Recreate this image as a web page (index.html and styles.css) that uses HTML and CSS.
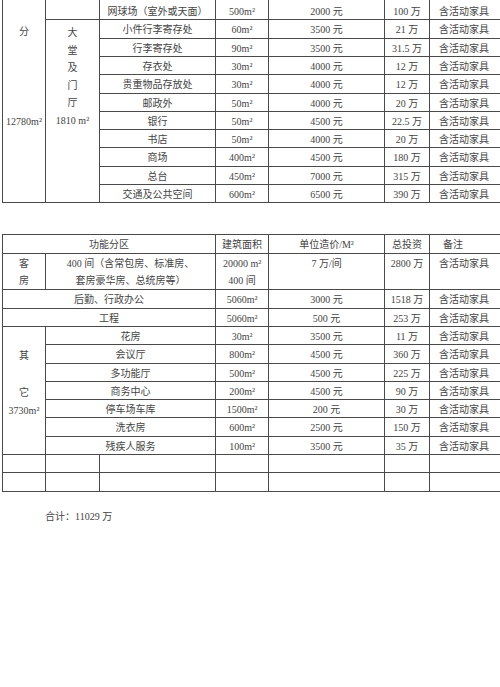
FILE: index.html
```html
<!DOCTYPE html>
<html lang="zh-CN">
<head>
<meta charset="utf-8">
<title>功能分区投资估算</title>
<link rel="stylesheet" href="styles.css">
</head>
<body>
<table class="sheet sheet-top">
  <colgroup><col class="c1"><col class="c2"><col class="c3"><col class="c4"><col class="c5"><col class="c6"><col class="c7"></colgroup>
  <tr class="r first">
    <td rowspan="11" class="stack stack-area">分<br>&nbsp;<br>&nbsp;<br>&nbsp;<br>&nbsp;<br>12780m²</td>
    <td></td><td>网球场（室外或天面）</td><td>500m²</td><td>2000 元</td><td>100 万</td><td class="note">含活动家具</td>
  </tr>
  <tr class="r">
    <td rowspan="10" class="stack stack-lobby">大<br>堂<br>及<br>门<br>厅<br>1810 m²</td>
    <td>小件行李寄存处</td><td>60m²</td><td>3500 元</td><td>21 万</td><td class="note">含活动家具</td>
  </tr>
  <tr class="r"><td>行李寄存处</td><td>90m²</td><td>3500 元</td><td>31.5 万</td><td class="note">含活动家具</td></tr>
  <tr class="r"><td>存衣处</td><td>30m²</td><td>4000 元</td><td>12 万</td><td class="note">含活动家具</td></tr>
  <tr class="r"><td>贵重物品存放处</td><td>30m²</td><td>4000 元</td><td>12 万</td><td class="note">含活动家具</td></tr>
  <tr class="r"><td>邮政外</td><td>50m²</td><td>4000 元</td><td>20 万</td><td class="note">含活动家具</td></tr>
  <tr class="r"><td>银行</td><td>50m²</td><td>4500 元</td><td>22.5 万</td><td class="note">含活动家具</td></tr>
  <tr class="r"><td>书店</td><td>50m²</td><td>4000 元</td><td>20 万</td><td class="note">含活动家具</td></tr>
  <tr class="r"><td>商场</td><td>400m²</td><td>4500 元</td><td>180 万</td><td class="note">含活动家具</td></tr>
  <tr class="r"><td>总台</td><td>450m²</td><td>7000 元</td><td>315 万</td><td class="note">含活动家具</td></tr>
  <tr class="r"><td>交通及公共空间</td><td>600m²</td><td>6500 元</td><td>390 万</td><td class="note">含活动家具</td></tr>
</table>

<table class="sheet sheet-bottom">
  <colgroup><col class="c1"><col class="c2"><col class="c3"><col class="c4"><col class="c5"><col class="c6"><col class="c7"></colgroup>
  <tr class="rh">
    <td colspan="3">功能分区</td><td>建筑面积</td><td>单位造价/M²</td><td>总投资</td><td class="note note-head">备注</td>
  </tr>
  <tr class="r2">
    <td class="multi">客<br>房</td>
    <td colspan="2" class="multi">400 间（含常包房、标准房、<br>套房豪华房、总统房等）</td>
    <td class="multi">20000 m²<br>400 间</td>
    <td class="multi">7 万/间</td>
    <td class="multi">2800 万</td>
    <td class="note multi">含活动家具</td>
  </tr>
  <tr class="r"><td colspan="3">后勤、行政办公</td><td>5060m²</td><td>3000 元</td><td>1518 万</td><td class="note">含活动家具</td></tr>
  <tr class="r"><td colspan="3">工程</td><td>5060m²</td><td>500 元</td><td>253 万</td><td class="note">含活动家具</td></tr>
  <tr class="r">
    <td rowspan="7" class="stack stack-other">其<br>&nbsp;<br>它<br>3730m²</td>
    <td colspan="2">花房</td><td>30m²</td><td>3500 元</td><td>11 万</td><td class="note">含活动家具</td>
  </tr>
  <tr class="r"><td colspan="2">会议厅</td><td>800m²</td><td>4500 元</td><td>360 万</td><td class="note">含活动家具</td></tr>
  <tr class="r"><td colspan="2">多功能厅</td><td>500m²</td><td>4500 元</td><td>225 万</td><td class="note">含活动家具</td></tr>
  <tr class="r"><td colspan="2">商务中心</td><td>200m²</td><td>4500 元</td><td>90 万</td><td class="note">含活动家具</td></tr>
  <tr class="r"><td colspan="2">停车场车库</td><td>1500m²</td><td>200 元</td><td>30 万</td><td class="note">含活动家具</td></tr>
  <tr class="r"><td colspan="2">洗衣房</td><td>600m²</td><td>2500 元</td><td>150 万</td><td class="note">含活动家具</td></tr>
  <tr class="r"><td colspan="2">残疾人服务</td><td>100m²</td><td>3500 元</td><td>35 万</td><td class="note">含活动家具</td></tr>
  <tr class="r"><td></td><td></td><td></td><td></td><td></td><td></td><td></td></tr>
  <tr class="r"><td></td><td></td><td></td><td></td><td></td><td></td><td></td></tr>
</table>

<p class="total">合计：11029 万</p>
</body>
</html>
```

FILE: styles.css
```css
html,
body {
  margin: 0;
  padding: 0;
  background: #ffffff;
  overflow: hidden;
}

body {
  width: 500px;
  height: 687px;
  font-family: "Liberation Serif", "Noto Sans CJK SC", serif;
  font-size: 10px;
  color: #444444;
}

.sheet {
  border-collapse: collapse;
  table-layout: fixed;
  width: 499px;
  margin-left: 2px;
}

.sheet-top {
  margin-top: -1px;
}

.sheet-bottom {
  margin-top: 31px;
}

.c1 { width: 43px; }
.c2 { width: 54px; }
.c3 { width: 116px; }
.c4 { width: 53px; }
.c5 { width: 116px; }
.c6 { width: 45px; }
.c7 { width: 72px; }

.sheet td {
  border: 1px solid #4a4a4a;
  padding: 3px 0 0;
  line-height: 14px;
  text-align: center;
  vertical-align: top;
  white-space: nowrap;
  overflow: visible;
}

.r { height: 18.3px; }
.r.first { height: 20.4px; }
.rh { height: 19px; }
.r2 { height: 36px; }

.r.first td {
  padding-top: 5px;
}

.sheet td.note {
  text-align: left;
  padding-left: 9px;
}

.sheet td.note-head {
  padding-left: 13px;
}

.sheet td.multi {
  padding-top: 1px;
  line-height: 17px;
}

.sheet td.stack-area {
  padding-top: 23px;
  line-height: 17.9px;
}

.sheet td.stack-lobby {
  padding-top: 4px;
  line-height: 17.5px;
}

.sheet td.stack-other {
  padding-top: 20px;
  line-height: 18.3px;
}

.total {
  margin: 19px 0 0 45px;
  line-height: 12px;
}
```
